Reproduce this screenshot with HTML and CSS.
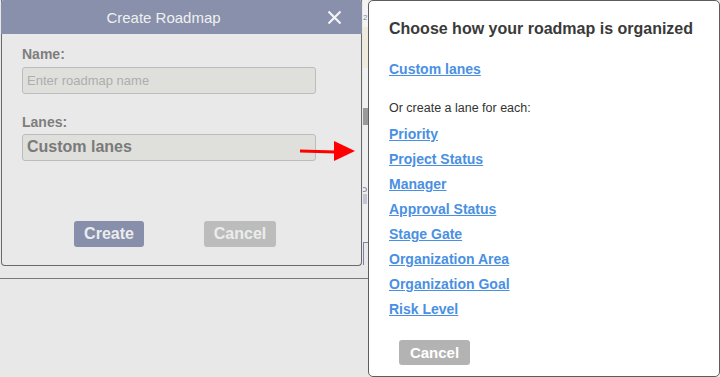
FILE: index.html
```html
<!DOCTYPE html>
<html>
<head>
    <link rel="stylesheet" href="styles.css">
</head>
<body>
    <div class="page">
        <div class="backdrop">
            <div class="backdrop-top">
                <div class="dialog">
                    <div class="dialog-header">
                        <span class="dialog-title">Create Roadmap</span>
                        <span class="dialog-close">
                            <svg width="15" height="15" viewBox="0 0 15 15">
                                <path d="M1.5 1.5 L13.5 13.5 M13.5 1.5 L1.5 13.5" stroke="#f4f4f4" stroke-width="2.2" fill="none"/>
                            </svg>
                        </span>
                    </div>
                    <div class="dialog-body">
                        <label class="field-label" for="roadmapName">Name:</label>
                        <input type="text" id="roadmapName" class="field-input" placeholder="Enter roadmap name">

                        <label class="field-label lanes-label">Lanes:</label>
                        <div class="field-select">Custom lanes</div>

                        <div class="dialog-actions">
                            <button class="btn btn-create">Create</button>
                            <button class="btn btn-cancel-muted">Cancel</button>
                        </div>
                    </div>
                    <svg class="pointer-arrow" width="60" height="24" viewBox="0 0 60 24">
                        <path d="M0 9.5 L36 10.5 L36 13.5 L0 12.5 Z" fill="#f00"/>
                        <path d="M34 1 L55 11 L34 21 Z" fill="#f00"/>
                    </svg>
                </div>
                <div class="strip">
                    <div class="strip-a">2</div>
                    <div class="strip-b"></div>
                    <div class="strip-c"></div>
                    <div class="strip-d"></div>
                    <div class="strip-e">
                        <span class="strip-dot"></span>
                        <span class="strip-bar"></span>
                    </div>
                    <div class="strip-f"></div>
                </div>
            </div>
            <div class="backdrop-rule"></div>
        </div>

        <div class="chooser">
            <h2 class="chooser-title">Choose how your roadmap is organized</h2>
            <a href="#" class="lane-link custom-link">Custom lanes</a>
            <p class="chooser-note">Or create a lane for each:</p>
            <ul class="lane-list">
                <li><a href="#" class="lane-link">Priority</a></li>
                <li><a href="#" class="lane-link">Project Status</a></li>
                <li><a href="#" class="lane-link">Manager</a></li>
                <li><a href="#" class="lane-link">Approval Status</a></li>
                <li><a href="#" class="lane-link">Stage Gate</a></li>
                <li><a href="#" class="lane-link">Organization Area</a></li>
                <li><a href="#" class="lane-link">Organization Goal</a></li>
                <li><a href="#" class="lane-link">Risk Level</a></li>
            </ul>
            <button class="btn btn-cancel">Cancel</button>
        </div>
    </div>
</body>
</html>
```

FILE: styles.css
```css
body {
    margin: 0;
    background: #e8e8e8;
    font-family: "Liberation Sans", Arial, sans-serif;
}

.page {
    display: flex;
    align-items: flex-start;
}

.backdrop {
    width: 368px;
}

.backdrop-top {
    display: flex;
    height: 278px;
}

.backdrop-rule {
    border-top: 1px solid #7a7a7a;
}

/* left dialog */
.dialog {
    position: relative;
    box-sizing: border-box;
    width: 362px;
    height: 266px;
    margin-left: 1px;
    background: #e9e9e9;
    border: 1px solid #6a6a6a;
    border-top: none;
    border-radius: 0 0 4px 4px;
}

.dialog-header {
    display: flex;
    align-items: center;
    height: 34px;
    background: #8890ab;
    border-radius: 3px 3px 0 0;
    margin: 0 -1px;
}

.dialog-title {
    flex: 1;
    text-align: center;
    color: #f0f0f0;
    font-size: 15px;
    padding-left: 2px;
}

.dialog-close {
    display: flex;
    width: 38px;
    padding-left: 3px;
    box-sizing: border-box;
}

.dialog-body {
    padding: 12px 0 0 20px;
}

.field-label {
    display: block;
    color: #7e7e7e;
    font-size: 14px;
    font-weight: bold;
    line-height: 16px;
}

.field-input,
.field-select {
    display: block;
    box-sizing: border-box;
    width: 294px;
    height: 27px;
    background: #dfe0dc;
    border: 1px solid #bcbcbc;
    border-radius: 3px;
    font-family: "Liberation Sans", Arial, sans-serif;
}

.field-input {
    margin-top: 5px;
    padding: 0 4px;
    font-size: 13px;
}

.field-input::placeholder {
    color: #adadad;
}

.lanes-label {
    margin-top: 20px;
}

.field-select {
    margin-top: 4px;
    padding: 3px 4px 0;
    color: #7a7a7a;
    font-size: 16px;
    font-weight: bold;
}

.dialog-actions {
    display: flex;
    gap: 60px;
    margin: 60px 0 0 52px;
}

.btn {
    border: none;
    border-radius: 3px;
    font-family: "Liberation Sans", Arial, sans-serif;
    font-weight: bold;
    cursor: pointer;
    padding: 0;
}

.btn-create,
.btn-cancel-muted {
    height: 26px;
    font-size: 16px;
    color: #ececec;
}

.btn-create {
    width: 70px;
    background: #878fab;
}

.btn-cancel-muted {
    width: 72px;
    background: #bcbcbc;
}

.pointer-arrow {
    position: absolute;
    left: 298px;
    top: 140px;
}

/* bits of the page behind */
.strip {
    display: flex;
    flex-direction: column;
    width: 5px;
    margin-left: 1px;
    overflow: hidden;
}

.strip-a {
    height: 27px;
    background: #f3f3f3;
    color: #7b84a8;
    font-size: 8px;
    line-height: 8px;
    padding-top: 14px;
    box-sizing: border-box;
}

.strip-b {
    height: 41px;
    background: #eeebdc;
}

.strip-c {
    height: 40px;
    background: #f1f1f1;
}

.strip-d {
    height: 17px;
    background: #9a9a9a;
}

.strip-e {
    display: flex;
    flex-direction: column;
    height: 118px;
    background: #efefef;
    border-bottom: 1px solid #7b84a8;
    box-sizing: border-box;
    padding-top: 62px;
}

.strip-dot {
    width: 6px;
    height: 5px;
    border: 1px solid #8890ab;
    border-radius: 50%;
    box-sizing: border-box;
    margin-left: -2px;
}

.strip-bar {
    width: 4px;
    height: 10px;
    margin-top: 2px;
    background: #c4c6d2;
}

.strip-f {
    height: 22px;
    border-left: 1px solid #7b84a8;
    box-sizing: border-box;
}

/* right chooser */
.chooser {
    box-sizing: border-box;
    width: 352px;
    height: 377px;
    background: #fff;
    border: 1px solid #5c5c5c;
    border-radius: 5px;
    padding: 18px 20px 0;
}

.chooser-title {
    margin: 0;
    color: #3a3a3a;
    font-size: 16px;
    line-height: 20px;
}

.lane-link {
    display: inline-block;
    color: #4a90e2;
    font-size: 14px;
    font-weight: bold;
    line-height: 16px;
    text-decoration: underline;
}

.custom-link {
    margin-top: 22px;
}

.chooser-note {
    margin: 22px 0 0;
    color: #333;
    font-size: 12.5px;
    line-height: 16px;
}

.lane-list {
    list-style: none;
    margin: 9px 0 0;
    padding: 0;
}

.lane-list li {
    height: 16px;
    margin-bottom: 9px;
}

.btn-cancel {
    display: block;
    width: 71px;
    height: 25px;
    margin: 24px 0 0 10px;
    background: #b3b3b3;
    color: #fff;
    font-size: 15px;
}
```
